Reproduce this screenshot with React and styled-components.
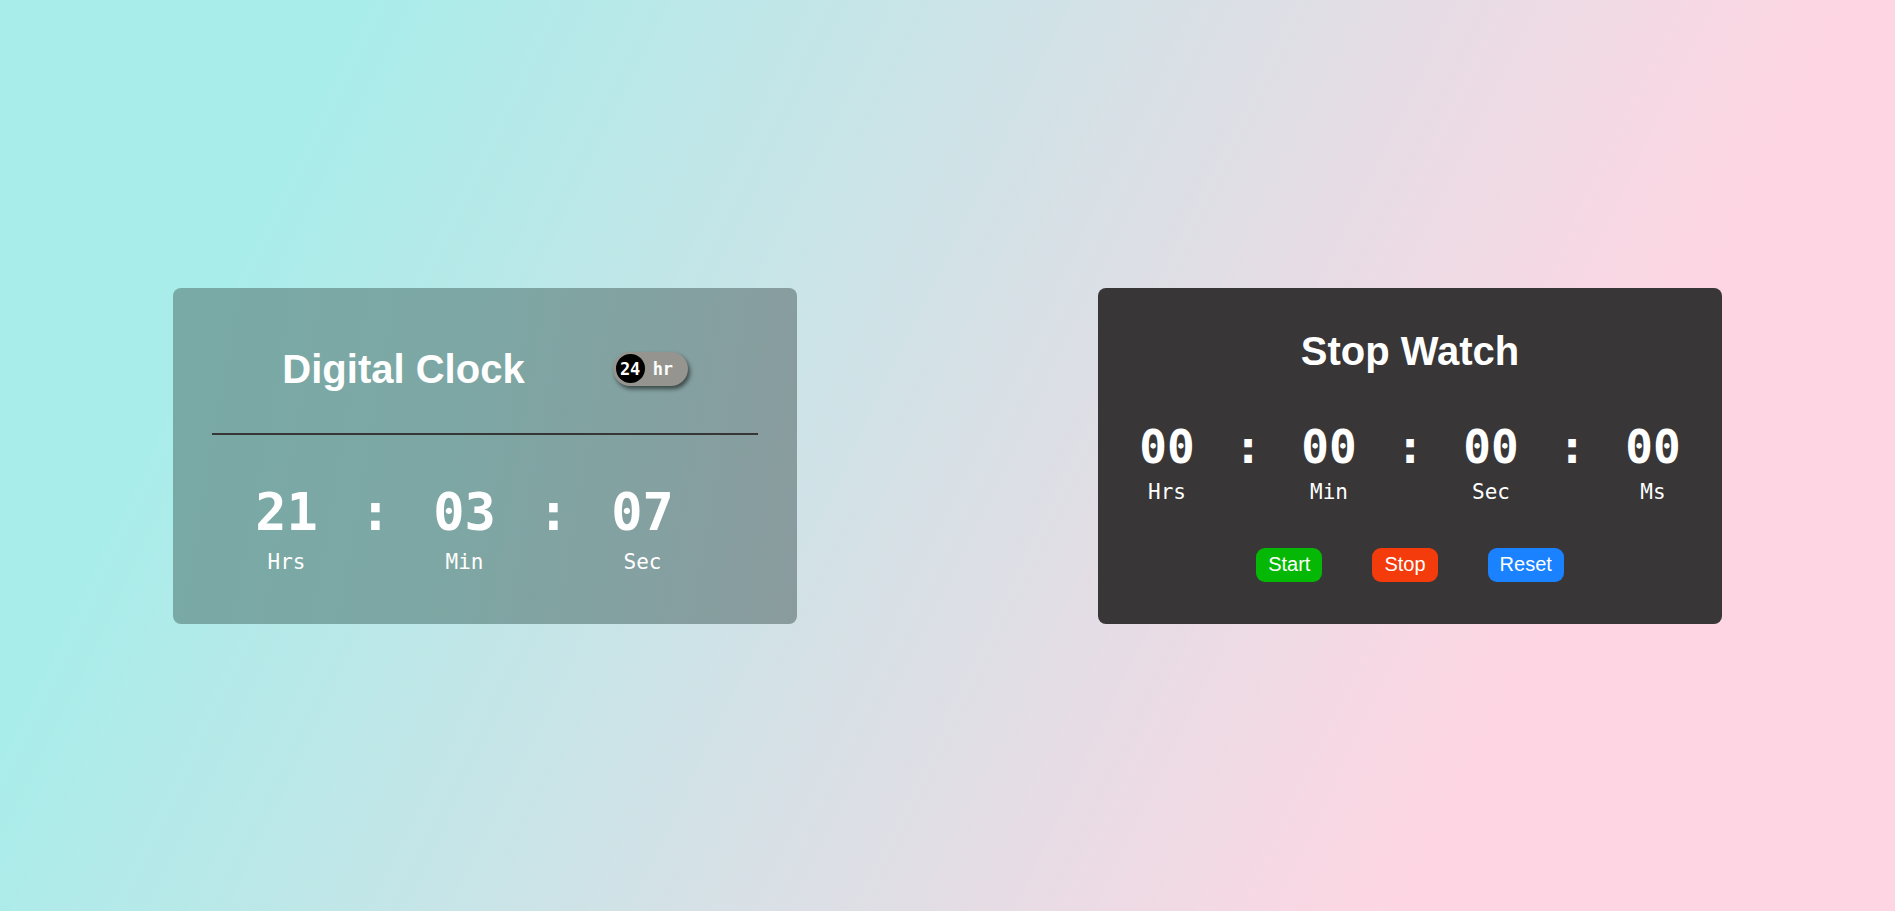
import React from 'react';
import styled, { createGlobalStyle } from 'styled-components';

const GlobalStyle = createGlobalStyle`
    html, body {
        margin: 0;
        padding: 0;
    }
    body {
        font-family: "Liberation Sans", Arial, sans-serif;
    }
`

const Page = styled.div`
    min-height: 100vh;
    display: flex;
    align-items: center;
    justify-content: center;
    gap: 301px;
    background: linear-gradient(116deg, #a8edea 15%, #fed6e3 79%);
`
const Card = styled.div`
    box-sizing: border-box;
    width: 624px;
    height: 336px;
    border-radius: 8px;
    padding-top: ${p => p.$top}px;
    color: #FFFFFF;
    background: ${p => p.$dark
        ? '#383637'
        : 'linear-gradient(100deg, #79aaa6 0%, #7da7a4 45%, #8a9b9e 100%)'};
`
const Header = styled.div`
    display: flex;
    align-items: center;
    justify-content: center;
    gap: 88px;
`
const Title = styled.h1`
    margin: 0;
    font-size: 40px;
    line-height: 46px;
    font-weight: bold;
    text-align: center;
`
const Toggle = styled.div`
    box-sizing: border-box;
    display: flex;
    align-items: center;
    width: 75px;
    height: 34px;
    padding: 0 3px;
    border-radius: 17px;
    background: #96948f;
    box-shadow: 2px 3px 4px rgba(0, 0, 0, 0.55);
    font-family: "DejaVu Sans Mono", monospace;
    font-weight: bold;
    font-size: 16px;
    cursor: pointer;
`
const Knob = styled.span`
    display: flex;
    align-items: center;
    justify-content: center;
    width: 29px;
    height: 29px;
    border-radius: 50%;
    background: #000;
    font-size: 17px;
`
const ToggleText = styled.span`
    margin-left: 8px;
    font-size: 17px;
`
const Divider = styled.hr`
    margin: 41px 39px 0;
    height: 2px;
    border: none;
    background: #363636;
`
const TimeRow = styled.div`
    display: flex;
    justify-content: center;
    margin-top: ${p => p.$gap}px;
    padding-right: ${p => p.$shift || 0}px;
`
const Unit = styled.div`
    width: ${p => p.$w}px;
    display: flex;
    flex-direction: column;
    align-items: center;
`
const Digits = styled.span`
    font-family: "DejaVu Sans Mono", monospace;
    font-weight: bold;
    font-size: ${p => p.$size}px;
    line-height: ${p => p.$lh}px;
`
const Colon = styled(Digits)`
    width: ${p => p.$w}px;
    text-align: center;
`
const Label = styled.span`
    margin-top: ${p => p.$gap}px;
    font-family: "DejaVu Sans Mono", monospace;
    font-size: 21px;
    line-height: 24px;
`
const Buttons = styled.div`
    display: flex;
    justify-content: center;
    gap: 50px;
    margin-top: 44px;
`
const Button = styled.button`
    height: 34px;
    padding: 0 12px;
    border: none;
    border-radius: 9px;
    background: ${p => p.$bg};
    color: #FFFFFF;
    font-family: "Liberation Sans", Arial, sans-serif;
    font-size: 20px;
    cursor: pointer;
`

const Clock = () => {
    const units = [['21', 'Hrs'], ['03', 'Min'], ['07', 'Sec']]
    return (
        <Card $top={58}>
            <Header>
                <Title>Digital Clock</Title>
                <Toggle>
                    <Knob>24</Knob>
                    <ToggleText>hr</ToggleText>
                </Toggle>
            </Header>
            <Divider />
            <TimeRow $gap={47} $shift={41}>
                {units.map(([v, l], i) => (
                    <React.Fragment key={l}>
                        {i > 0 && <Colon $w={78} $size={52} $lh={60}>:</Colon>}
                        <Unit $w={100}>
                            <Digits $size={52} $lh={60}>{v}</Digits>
                            <Label $gap={8}>{l}</Label>
                        </Unit>
                    </React.Fragment>
                ))}
            </TimeRow>
        </Card>
    )
}

const StopWatch = () => {
    const units = ['Hrs', 'Min', 'Sec', 'Ms']
    return (
        <Card $top={40} $dark>
            <Title>Stop Watch</Title>
            <TimeRow $gap={46}>
                {units.map((l, i) => (
                    <React.Fragment key={l}>
                        {i > 0 && <Colon $w={72} $size={46} $lh={54}>:</Colon>}
                        <Unit $w={90}>
                            <Digits $size={46} $lh={54}>00</Digits>
                            <Label $gap={6}>{l}</Label>
                        </Unit>
                    </React.Fragment>
                ))}
            </TimeRow>
            <Buttons>
                <Button $bg="#05b805">Start</Button>
                <Button $bg="#f33b0c">Stop</Button>
                <Button $bg="#1a82fe">Reset</Button>
            </Buttons>
        </Card>
    )
}

export default function App() {
    return (
        <Page>
            <GlobalStyle />
            <Clock />
            <StopWatch />
        </Page>
    )
}
